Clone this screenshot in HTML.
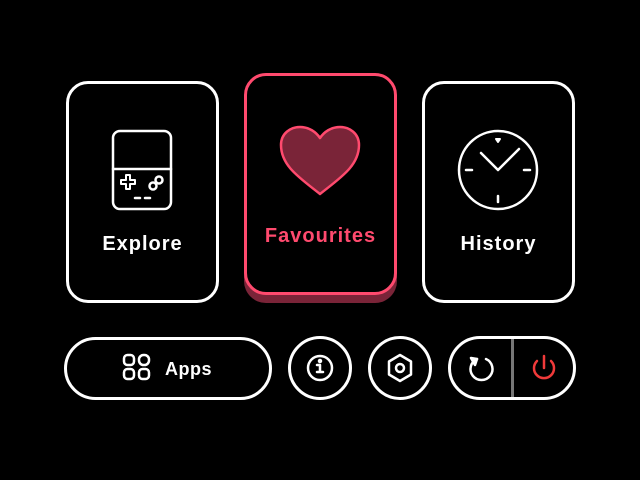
<!DOCTYPE html>
<html><head><style>
body{margin:0;width:640px;height:480px;background:#000;overflow:hidden;position:relative;font-family:"Liberation Sans",sans-serif}
.card{position:absolute;box-sizing:border-box;border:3px solid #fff;border-radius:22px;width:153px;height:222px;background:#000}
.lbl{position:absolute;width:100%;text-align:center;font-weight:bold;font-size:20px;color:#fff;letter-spacing:1px}
.b{position:absolute;box-sizing:border-box;border:3px solid #fff;background:#000}
svg{position:absolute}
</style></head><body>
<div class="card" style="left:66px;top:81px"><div class="lbl" style="top:149px">Explore</div></div>
<div style="position:absolute;left:244px;top:81px;width:153px;height:222px;border-radius:22px;background:#7a2438"></div>
<div class="card" style="left:244px;top:73px;border-color:#ff4a6e"><div class="lbl" style="top:149px;color:#ff4a6e">Favourites</div></div>
<div class="card" style="left:422px;top:81px"><div class="lbl" style="top:149px">History</div></div>
<svg width="640" height="480" style="left:0;top:0" fill="none" stroke="#fff" stroke-width="2.5" stroke-linecap="round" stroke-linejoin="round">
<rect x="113" y="131" width="58" height="78" rx="7"/>
<line x1="113" y1="169" x2="171" y2="169"/>
<path d="M126 175h4v5h5v4h-5v5h-4v-5h-5v-4h5z" stroke-width="2"/>
<circle cx="153" cy="186" r="3.5"/><circle cx="159" cy="180" r="3.5"/>
<path d="M135 198h5M145 198h5"/>
<path d="M320 194 C300 178 281 166 281 145 C281 133 291 127 300 127 C309 127 316 132 320 138 C324 132 331 127 340 127 C349 127 359 133 359 145 C359 166 340 178 320 194Z" fill="#7a2438" stroke="#ff4a6e"/>
<circle cx="498" cy="170" r="39"/>
<path d="M481 153 L498 170 L519 149 M466 170h6M524 170h6M498 196v6"/>
<path d="M496 139h4l-2 3z" fill="#fff" stroke-width="2"/>
</svg>
<div class="b" style="left:64px;top:337px;width:208px;height:63px;border-radius:32px"><div style="position:absolute;left:98px;top:19px;color:#fff;font-weight:bold;font-size:18px;letter-spacing:0.5px">Apps</div></div>
<div class="b" style="left:288px;top:336px;width:64px;height:64px;border-radius:50%"></div>
<div class="b" style="left:368px;top:336px;width:64px;height:64px;border-radius:50%"></div>
<div class="b" style="left:448px;top:336px;width:128px;height:64px;border-radius:32px"></div>
<div style="position:absolute;left:511px;top:339px;width:3px;height:58px;background:#777"></div>
<svg width="640" height="480" style="left:0;top:0" fill="none" stroke="#fff" stroke-width="2.5" stroke-linecap="round" stroke-linejoin="round">
<rect x="124" y="355" width="10" height="10" rx="3.5"/><rect x="139" y="355" width="10" height="10" rx="4.5"/>
<rect x="124" y="369" width="10" height="10" rx="3.5"/><rect x="139" y="369" width="10" height="10" rx="3.5"/>
<circle cx="320" cy="368" r="12"/><path d="M317 365h3v7M317 372h6"/><circle cx="320" cy="361" r="1" fill="#fff"/>
<path d="M400 355l11 6.5v13l-11 6.5-11-6.5v-13z"/><circle cx="400" cy="368" r="4"/>
<path d="M477 359 A11 11 0 1 0 486 359"/><path d="M471 358l6 1-2 6z" fill="#fff"/>
<path d="M544 356v12" stroke="#f03a3a"/><path d="M537 361 A10 10 0 1 0 551 361" stroke="#f03a3a"/>
</svg>
</body></html>
